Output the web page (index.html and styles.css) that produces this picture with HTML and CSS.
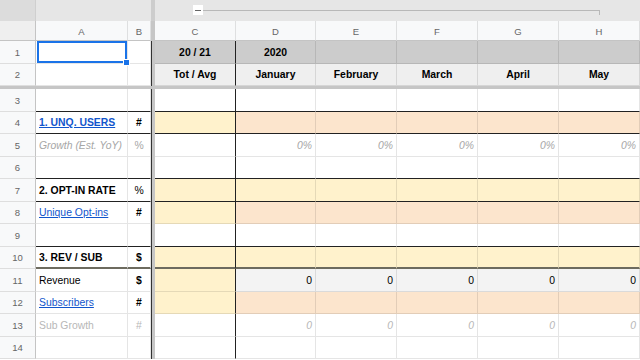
FILE: index.html
```html
<!DOCTYPE html>
<html lang="en">
<head>
    <meta charset="UTF-8">
    <meta name="viewport" content="width=device-width, initial-scale=1.0">
    <title>Metrics sheet</title>
    <link rel="stylesheet" href="styles.css">
</head>
<body>
<div class="sheet">
    <!-- column group bar -->
    <div class="groupbar">
        <div class="gb-corner"></div>
        <div class="gb-left"></div>
        <div class="gb-fz"></div>
        <div class="gb-main">
            <span class="gb-toggle"><span class="gb-minus"></span></span>
            <span class="gb-line"></span>
        </div>
    </div>

    <!-- column letters -->
    <div class="row colheads">
        <div class="cell rh"></div>
        <div class="cell col-a">A</div>
        <div class="cell col-b">B</div>
        <div class="fz"></div>
        <div class="cell col-c">C</div>
        <div class="cell col-d">D</div>
        <div class="cell col-m">E</div>
        <div class="cell col-m">F</div>
        <div class="cell col-m">G</div>
        <div class="cell col-m">H</div>
    </div>

    <div class="row head1">
        <div class="cell rh">1</div>
        <div class="cell col-a sel"></div>
        <div class="cell col-b"></div>
        <div class="fz dark"></div>
        <div class="cell col-c hd">20 / 21</div>
        <div class="cell col-d hd">2020</div>
        <div class="cell col-m hd"></div>
        <div class="cell col-m hd"></div>
        <div class="cell col-m hd"></div>
        <div class="cell col-m hd"></div>
    </div>
    <div class="row head2">
        <div class="cell rh">2</div>
        <div class="cell col-a"></div>
        <div class="cell col-b"></div>
        <div class="fz dark"></div>
        <div class="cell col-c hd">Tot / Avg</div>
        <div class="cell col-d hd">January</div>
        <div class="cell col-m hd">February</div>
        <div class="cell col-m hd">March</div>
        <div class="cell col-m hd">April</div>
        <div class="cell col-m hd">May</div>
    </div>

    <div class="hfz"></div>

    <div class="row line-b">
        <div class="cell rh">3</div>
        <div class="cell col-a"></div>
        <div class="cell col-b"></div>
        <div class="fz dark"></div>
        <div class="cell col-c"></div>
        <div class="cell col-d"></div>
        <div class="cell col-m"></div>
        <div class="cell col-m"></div>
        <div class="cell col-m"></div>
        <div class="cell col-m"></div>
    </div>
    <div class="row line-b">
        <div class="cell rh">4</div>
        <div class="cell col-a"><a class="link bold" href="#">1. UNQ. USERS</a></div>
        <div class="cell col-b bold">#</div>
        <div class="fz dark"></div>
        <div class="cell col-c yellow"></div>
        <div class="cell col-d peach"></div>
        <div class="cell col-m peach"></div>
        <div class="cell col-m peach"></div>
        <div class="cell col-m peach"></div>
        <div class="cell col-m peach"></div>
    </div>
    <div class="row">
        <div class="cell rh">5</div>
        <div class="cell col-a muted italic">Growth (Est. YoY)</div>
        <div class="cell col-b muted">%</div>
        <div class="fz dark"></div>
        <div class="cell col-c"></div>
        <div class="cell col-d num muted italic">0%</div>
        <div class="cell col-m num muted italic">0%</div>
        <div class="cell col-m num muted italic">0%</div>
        <div class="cell col-m num muted italic">0%</div>
        <div class="cell col-m num muted italic">0%</div>
    </div>
    <div class="row line-b">
        <div class="cell rh">6</div>
        <div class="cell col-a"></div>
        <div class="cell col-b"></div>
        <div class="fz dark"></div>
        <div class="cell col-c"></div>
        <div class="cell col-d"></div>
        <div class="cell col-m"></div>
        <div class="cell col-m"></div>
        <div class="cell col-m"></div>
        <div class="cell col-m"></div>
    </div>
    <div class="row line-b">
        <div class="cell rh">7</div>
        <div class="cell col-a bold">2. OPT-IN RATE</div>
        <div class="cell col-b">%</div>
        <div class="fz dark"></div>
        <div class="cell col-c yellow"></div>
        <div class="cell col-d yellow"></div>
        <div class="cell col-m yellow"></div>
        <div class="cell col-m yellow"></div>
        <div class="cell col-m yellow"></div>
        <div class="cell col-m yellow"></div>
    </div>
    <div class="row">
        <div class="cell rh">8</div>
        <div class="cell col-a"><a class="link" href="#">Unique Opt-ins</a></div>
        <div class="cell col-b bold">#</div>
        <div class="fz dark"></div>
        <div class="cell col-c yellow"></div>
        <div class="cell col-d peach"></div>
        <div class="cell col-m peach"></div>
        <div class="cell col-m peach"></div>
        <div class="cell col-m peach"></div>
        <div class="cell col-m peach"></div>
    </div>
    <div class="row line-b">
        <div class="cell rh">9</div>
        <div class="cell col-a"></div>
        <div class="cell col-b"></div>
        <div class="fz dark"></div>
        <div class="cell col-c"></div>
        <div class="cell col-d"></div>
        <div class="cell col-m"></div>
        <div class="cell col-m"></div>
        <div class="cell col-m"></div>
        <div class="cell col-m"></div>
    </div>
    <div class="row thick-b">
        <div class="cell rh">10</div>
        <div class="cell col-a bold">3. REV / SUB</div>
        <div class="cell col-b bold">$</div>
        <div class="fz dark"></div>
        <div class="cell col-c yellow"></div>
        <div class="cell col-d yellow"></div>
        <div class="cell col-m yellow"></div>
        <div class="cell col-m yellow"></div>
        <div class="cell col-m yellow"></div>
        <div class="cell col-m yellow"></div>
    </div>
    <div class="row">
        <div class="cell rh">11</div>
        <div class="cell col-a">Revenue</div>
        <div class="cell col-b bold">$</div>
        <div class="fz dark"></div>
        <div class="cell col-c yellow"></div>
        <div class="cell col-d num grey">0</div>
        <div class="cell col-m num grey">0</div>
        <div class="cell col-m num grey">0</div>
        <div class="cell col-m num grey">0</div>
        <div class="cell col-m num grey">0</div>
    </div>
    <div class="row">
        <div class="cell rh">12</div>
        <div class="cell col-a"><a class="link" href="#">Subscribers</a></div>
        <div class="cell col-b bold">#</div>
        <div class="fz dark"></div>
        <div class="cell col-c yellow"></div>
        <div class="cell col-d peach"></div>
        <div class="cell col-m peach"></div>
        <div class="cell col-m peach"></div>
        <div class="cell col-m peach"></div>
        <div class="cell col-m peach"></div>
    </div>
    <div class="row">
        <div class="cell rh">13</div>
        <div class="cell col-a faint">Sub Growth</div>
        <div class="cell col-b faint">#</div>
        <div class="fz dark"></div>
        <div class="cell col-c"></div>
        <div class="cell col-d num faint italic">0</div>
        <div class="cell col-m num faint italic">0</div>
        <div class="cell col-m num faint italic">0</div>
        <div class="cell col-m num faint italic">0</div>
        <div class="cell col-m num faint italic">0</div>
    </div>
    <div class="row">
        <div class="cell rh">14</div>
        <div class="cell col-a"></div>
        <div class="cell col-b"></div>
        <div class="fz dark"></div>
        <div class="cell col-c"></div>
        <div class="cell col-d"></div>
        <div class="cell col-m"></div>
        <div class="cell col-m"></div>
        <div class="cell col-m"></div>
        <div class="cell col-m"></div>
    </div>
</div>
</body>
</html>
```

FILE: styles.css
```css
body {
    margin: 0;
    background-color: #fff;
    color: #000;
    font-family: "Liberation Sans", Arial, sans-serif;
    font-size: 10.4px;
    overflow: hidden;
}

.sheet {
    width: 640px;
    height: 360px;
    overflow: hidden;
}

/* group bar on top */
.groupbar {
    display: flex;
    height: 21px;
    background-color: #e6e6e6;
}

.gb-corner {
    width: 36px;
    background-color: #dcdcdc;
    border-right: 1px solid #cfcfcf;
    box-sizing: border-box;
}

.gb-left {
    width: 115px;
}

.gb-fz {
    width: 4px;
    background-color: #cdcdcd;
}

.gb-main {
    flex: 1;
    display: flex;
    align-items: flex-start;
    padding: 5px 0 0 38px;
}

.gb-toggle {
    width: 10px;
    height: 10px;
    background-color: #fff;
    display: flex;
    align-items: center;
    justify-content: center;
}

.gb-minus {
    width: 6px;
    height: 1px;
    background-color: #666;
}

.gb-line {
    width: 397px;
    height: 5px;
    margin-top: 5px;
    border-top: 1px solid #b8b8b8;
    border-right: 1px solid #b8b8b8;
    box-sizing: border-box;
}

/* grid */
.row {
    display: flex;
    height: 22.5px;
}

.cell {
    box-sizing: border-box;
    height: 100%;
    flex: none;
    display: flex;
    align-items: center;
    padding: 1px 3px 0;
    white-space: nowrap;
    overflow: hidden;
    border-right: 1px solid rgba(0, 0, 0, 0.1);
    border-bottom: 1px solid rgba(0, 0, 0, 0.1);
}

.rh {
    width: 36px;
    justify-content: center;
    background-color: #f8f9fa;
    color: #666;
    font-size: 9.5px;
    border-right-color: #c4c4c4;
    border-bottom-color: #dedede;
}

.col-a { width: 92px; }
.col-b { width: 23px; justify-content: center; }
.col-c { width: 81px; justify-content: center; border-right-color: #222; }
.col-d { width: 80px; justify-content: center; }
.col-m { width: 81px; justify-content: center; }

.fz {
    width: 4px;
    flex: none;
    box-sizing: border-box;
    background-color: #c6c6c6;
}

.fz.dark {
    border-left: 1px solid #333;
}

.colheads {
    height: 20px;
}

.colheads .cell {
    justify-content: center;
    background-color: #f8f9fa;
    color: #666;
    font-size: 9.5px;
    border-bottom-color: #c4c4c4;
}

.colheads .rh {
    background-color: #efefef;
}

.colheads .col-c {
    border-right-color: rgba(0, 0, 0, 0.1);
}

.head1 .hd {
    background-color: #cccccc;
    font-weight: bold;
}

.head2 .hd {
    background-color: #efefef;
    font-weight: bold;
}

.hfz {
    height: 3px;
    background-color: #c6c6c6;
}

/* strong row borders */
.line-b .cell:not(.rh) {
    border-bottom-color: #222;
}

.thick-b .cell:not(.rh) {
    border-bottom: 2px solid #6d6b5f;
}

.num {
    justify-content: flex-end;
}

.yellow { background-color: #fff2cc; }
.peach { background-color: #fce5cd; }
.grey { background-color: #f3f3f3; }

.bold { font-weight: bold; }
.italic { font-style: italic; }
.muted { color: #a6a6a6; }
.faint { color: #b7b7b7; }

.link {
    color: #1155cc;
    text-decoration: underline;
}

/* selected cell A1 */
.sel {
    position: relative;
    overflow: visible;
}

.sel::before {
    content: "";
    position: absolute;
    top: 0;
    left: 1px;
    right: 0;
    bottom: 0;
    border: 2px solid #1a73e8;
}

.sel::after {
    content: "";
    position: absolute;
    right: -3px;
    bottom: -3px;
    width: 5px;
    height: 5px;
    background-color: #1a73e8;
    border: 1px solid #fff;
    z-index: 1;
}
```
